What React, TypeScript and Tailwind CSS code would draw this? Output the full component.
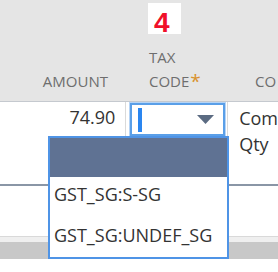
export default function App() {
  return (
    <div className="relative w-[278px] h-[272px] overflow-hidden bg-white font-['Open_Sans',sans-serif]">
      {/* header */}
      <div className="flex h-[102px] bg-[#e5e5e5] border-b border-[#c5c9cf]">
        <div className="w-[129px] flex items-end justify-end pr-[21px] pb-[8px]">
          <span className="text-[15px] text-[#6e6e6e] leading-[24px]">AMOUNT</span>
        </div>
        <div className="w-[104px] relative flex flex-col justify-end pl-[20px] pb-[8px]">
          <div className="absolute left-[19px] top-[3px] w-[33px] h-[31px] bg-white">
            <span className="absolute left-[6px] top-[6px] text-[28px] font-bold text-[#f0102a] leading-none font-['Liberation_Sans',sans-serif]">4</span>
          </div>
          <span className="text-[15px] text-[#6e6e6e] leading-[24px]">TAX</span>
          <span className="text-[15px] text-[#6e6e6e] leading-[24px] whitespace-nowrap">
            CODE<span className="relative top-[1px] ml-[1px] text-[19px] leading-none text-[#d9922e]">*</span>
          </span>
        </div>
        <div className="flex-1 flex items-end pl-[22px] pb-[8px]">
          <span className="text-[15px] text-[#6e6e6e] leading-[24px]">CO</span>
        </div>
      </div>

      {/* row */}
      <div className="flex h-[84px]">
        <div className="w-[129px] border-r border-b-2 border-r-[#dadada] border-b-[#8a96a6] flex justify-end pr-[10px] pt-[3px]">
          <span className="text-[18px] text-[#333] leading-[24px]">74.90</span>
        </div>
        <div className="w-[104px] border-r border-[#dadada] pl-[4px] pt-[1px]">
          <div className="w-[95px] h-[33px] border-2 border-[#5a9fe8] ring-1 ring-[#b5d4f6] flex items-center justify-between pl-[6px] pr-[9px]">
            <div className="w-[4px] h-[24px] bg-[#2a86f0]" />
            <svg width="17" height="9" viewBox="0 0 17 9">
              <path d="M0 0 L17 0 L8.5 9 Z" fill="#5b6b82" />
            </svg>
          </div>
        </div>
        <div className="flex-1 border-b-2 border-[#8a96a6] pl-[11px] pt-[3px]">
          <div className="text-[18px] text-[#333] leading-[26px] whitespace-nowrap">Com</div>
          <div className="text-[18px] text-[#333] leading-[26px] whitespace-nowrap">Qty</div>
        </div>
      </div>

      <div className="h-[50px]" />
      <div className="h-[6px] bg-[#efefef] border-t border-[#d9d9d9]" />
      <div className="h-[17px] bg-[#c8c8c8]" />

      {/* dropdown */}
      <div className="absolute left-[48px] top-[136px] w-[181px] h-[123px] bg-white border-2 border-[#4f94e6]">
        <div className="h-[39px] bg-[#5f7293]" />
        <div className="pl-[4px] pt-[5px] text-[18px] text-[#333] leading-[24px] whitespace-nowrap">GST_SG:S-SG</div>
        <div className="pl-[4px] pt-[17px] text-[18px] text-[#333] leading-[24px] whitespace-nowrap">GST_SG:UNDEF_SG</div>
      </div>
    </div>
  );
}
